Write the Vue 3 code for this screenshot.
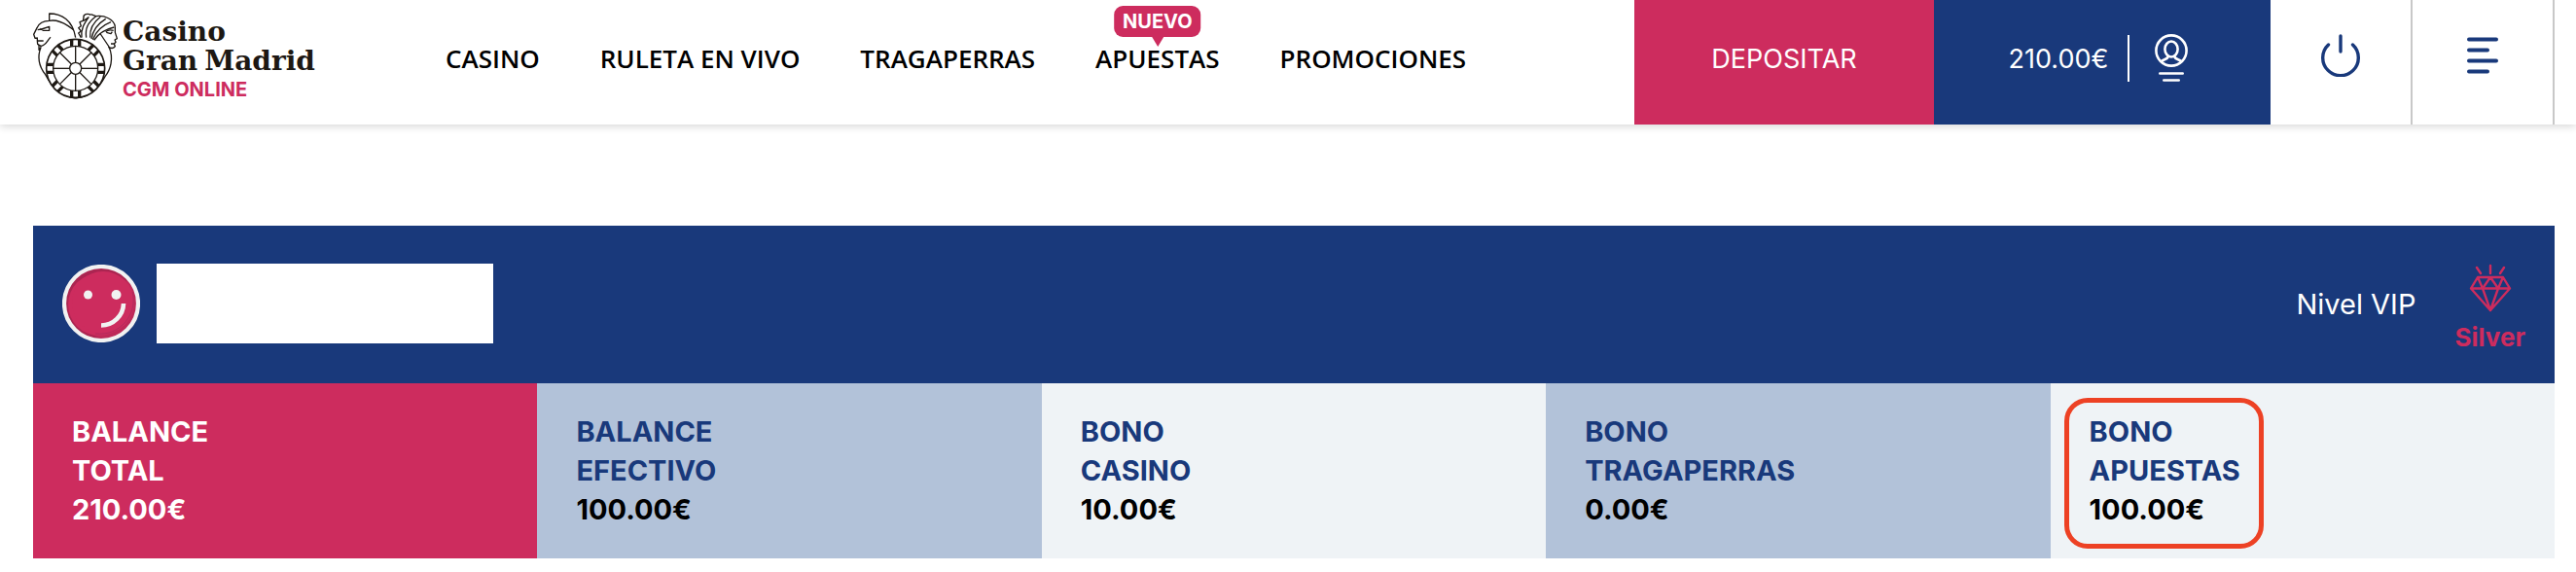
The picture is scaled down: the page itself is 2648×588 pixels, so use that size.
<script setup>
import { ref } from "vue";

const links = ref([
  { id: 1, text: "CASINO" },
  { id: 2, text: "RULETA EN VIVO" },
  { id: 3, text: "TRAGAPERRAS" },
  { id: 4, text: "APUESTAS", badge: "NUEVO" },
  { id: 5, text: "PROMOCIONES" },
]);

const balances = ref([
  { id: 1, top: "BALANCE", bottom: "TOTAL", amount: "210.00€", type: "total" },
  { id: 2, top: "BALANCE", bottom: "EFECTIVO", amount: "100.00€", type: "dark" },
  { id: 3, top: "BONO", bottom: "CASINO", amount: "10.00€", type: "light" },
  { id: 4, top: "BONO", bottom: "TRAGAPERRAS", amount: "0.00€", type: "dark" },
  {
    id: 5,
    top: "BONO",
    bottom: "APUESTAS",
    amount: "100.00€",
    type: "light",
    marked: true,
  },
]);

const spokes = [0, 45, 90, 135, 180, 225, 270, 315];
</script>

<template>
  <div class="page">
    <header class="header">
      <a href="#" class="logo">
        <svg class="logo-pic" viewBox="0 0 264 270" aria-hidden="true">
          <g
            transform="translate(-12 -18)"
            fill="none"
            stroke="#1d1813"
            stroke-width="4"
            stroke-linejoin="round"
          >
            <!-- lion -->
            <path d="M62 46V24C100 24 134 44 143 98" />
            <path d="M62 46C84 42 102 50 120 62L137 74M62 46C44 46 30 54 24 68L14 88L18 100L25 99V108H44M25 108L26 118L36 124C52 122 56 106 66 97" />
            <path d="M26 74L38 72L62 64V76H44L34 70" />
            <path d="M30 120V136L36 128C24 158 30 186 50 212C70 250 100 280 143 285" />
            <!-- woman -->
            <path d="M190 28C180 22 166 26 168 36L166 46L156 50L160 62L152 68L160 78L152 84L160 98" />
            <path d="M168 46L182 36M184 34C170 54 158 72 162 98M190 26L206 32C180 52 172 70 176 98M206 32C232 28 262 42 265 64" />
            <path d="M220 34C196 52 186 72 188 98M236 40C210 56 196 76 192 102M252 50C226 60 208 74 196 104M262 66C236 72 214 84 200 106" />
            <path d="M265 64V82L271 101L264 105L267 112L262 117L265 125C261 132 254 132 244 127M252 117H264M236 80C244 72 252 74 260 76M238 82L252 86L256 80" />
            <path d="M218 84L246 126C262 164 250 198 234 218C214 256 186 280 143 285" />
          </g>
          <circle cx="131" cy="175" r="90" fill="#fff" stroke="#1d1813" stroke-width="5" />
          <circle cx="131" cy="175" r="69" fill="none" stroke="#1d1813" stroke-width="4" />
          <g v-for="s in spokes" :key="s" :transform="`rotate(${s} 131 175)`">
            <path d="M131 157V106" stroke="#1d1813" stroke-width="4" />
            <path d="M119 86V107M143 86V107" stroke="#1d1813" stroke-width="10" />
          </g>
          <circle cx="131" cy="175" r="18" fill="#fff" stroke="#1d1813" stroke-width="4" />
        </svg>
        <span class="logo-text">
          <span class="logo-name">Casino</span>
          <span class="logo-name logo-pair"><span>Gran</span><span>Madrid</span></span>
          <span class="logo-sub">CGM ONLINE</span>
        </span>
      </a>

      <nav class="nav">
        <a v-for="link in links" :key="link.id" href="#" class="nav-link">
          {{ link.text }}
          <span v-if="link.badge" class="badge">{{ link.badge }}</span>
        </a>
      </nav>

      <div class="actions">
        <button type="button" class="deposit">DEPOSITAR</button>
        <button type="button" class="account">
          <span>210.00€</span>
          <span class="separator"></span>
          <svg class="user-icon" viewBox="0 0 34 50" aria-hidden="true">
            <g fill="none" stroke="#fff" stroke-width="2.6" stroke-linecap="round">
              <circle cx="17" cy="17" r="15.6" />
              <ellipse cx="17" cy="15.5" rx="6.6" ry="8" />
              <path d="M14 23C13 26 9 26 7 28M20 23C21 26 25 26 27 28M5.3 40.5H28.7M9.3 47.5H24.7" />
            </g>
          </svg>
        </button>
        <button type="button" class="icon-btn" aria-label="Salir">
          <svg class="power-icon" viewBox="0 0 40 44" aria-hidden="true">
            <path
              d="M20 2V18M7.5 11A18.3 18.3 0 1 0 32.5 11"
              fill="none"
              stroke="#19397b"
              stroke-width="3.4"
              stroke-linecap="round"
            />
          </svg>
        </button>
        <button type="button" class="icon-btn" aria-label="Menú">
          <svg class="menu-icon" viewBox="0 0 32 38" aria-hidden="true">
            <path
              d="M2 2.5H30M2 13.5H21M2 24.5H30M2 35.5H21"
              fill="none"
              stroke="#19397b"
              stroke-width="4"
              stroke-linecap="round"
            />
          </svg>
        </button>
      </div>
    </header>

    <main class="content">
      <section class="profile">
        <svg class="avatar" viewBox="0 0 80 80" aria-hidden="true">
          <circle cx="40" cy="40" r="38" fill="#ab2551" />
          <path d="M40 76A36 36 0 0 0 67 16L20 68Z" fill="#bd2958" />
          <circle cx="38" cy="41" r="32" fill="#cd2c5e" />
          <circle cx="42" cy="39" r="32" fill="#cd2c5e" />
          <path d="M72 28C78 50 60 74 34 71" fill="none" stroke="#a02a5a" stroke-width="0.6" />
          <circle cx="40" cy="40" r="38" fill="none" stroke="#f1f2f2" stroke-width="4.2" />
          <circle cx="26.5" cy="31" r="4.5" fill="#f1f2f2" />
          <circle cx="55.5" cy="31" r="5" fill="#f1f2f2" />
          <path d="M63 40A23 23 0 0 1 40 62.5" fill="none" stroke="#f1f2f2" stroke-width="4.6" />
        </svg>
        <div class="username"></div>
        <span class="level">Nivel VIP</span>
        <div class="vip">
          <svg class="diamond" viewBox="0 0 44 50" aria-hidden="true">
            <path
              d="M8 4L12 10M22 2V10M36 4L32 10M9 14H35L42 25.5L22 48L2 25.5ZM2 25.5H42M9 14L14 25.5L22 14L30 25.5L35 14M14 25.5L22 48L30 25.5"
              fill="none"
              stroke="#cd2c5e"
              stroke-width="2.4"
              stroke-linecap="round"
              stroke-linejoin="round"
            />
          </svg>
          <span>Silver</span>
        </div>
      </section>

      <section class="balances">
        <div v-for="item in balances" :key="item.id" class="balance" :class="item.type">
          <div>{{ item.top }}</div>
          <div>{{ item.bottom }}</div>
          <div class="amount">{{ item.amount }}</div>
          <span v-if="item.marked" class="mark"></span>
        </div>
      </section>
    </main>
  </div>
</template>

<style>
body {
  background: #fff;
}
</style>

<style scoped>
.page {
  font-family: Inter, "Liberation Sans", sans-serif;
  white-space: nowrap;
}
.header {
  display: flex;
  align-items: stretch;
  height: 128px;
  padding: 0 22px 0 34px;
  box-shadow: 0 2px 8px rgba(0, 0, 0, 0.16);
}
.logo {
  display: flex;
  align-items: flex-start;
  gap: 4px;
  width: 424px;
  padding-top: 12px;
  box-sizing: border-box;
  text-decoration: none;
}
.logo-pic {
  width: 88px;
  height: 90px;
}
.logo-text {
  display: flex;
  flex-direction: column;
  padding-top: 6px;
}
.logo-name {
  font: bold 28px/30px "DejaVu Serif", serif;
  color: #1d1813;
}
.logo-pair {
  display: flex;
  gap: 7px;
}
.logo-sub {
  font-size: 20px;
  line-height: 28px;
  font-weight: 700;
  color: #cd2c5e;
}
.nav {
  display: flex;
  align-items: center;
  gap: 62px;
  padding-bottom: 8px;
}
.nav-link {
  position: relative;
  font-family: "Open Sans", sans-serif;
  font-size: 26px;
  line-height: 36px;
  font-weight: 600;
  color: #000;
  text-decoration: none;
}
.badge {
  position: absolute;
  left: 50%;
  bottom: 40px;
  transform: translateX(-50%);
  padding: 0 9px;
  border-radius: 9px;
  background: #cd2c5e;
  font-family: Inter, sans-serif;
  font-size: 20px;
  line-height: 32px;
  font-weight: 700;
  color: #fff;
}
.badge::after {
  content: "";
  position: absolute;
  top: 100%;
  left: 50%;
  margin-left: -6px;
  border: 6px solid transparent;
  border-top: 10px solid #cd2c5e;
  border-bottom: 0;
}
.actions {
  display: flex;
  margin-left: auto;
}
.actions button {
  margin: 0;
  border: 0;
  border-radius: 0;
  padding: 0 0 8px;
  background: #fff;
  color: #fff;
  font-family: inherit;
  font-size: 27px;
  cursor: pointer;
}
.actions .deposit {
  width: 308px;
  background: #cd2c5e;
}
.actions .account {
  display: flex;
  align-items: center;
  justify-content: center;
  gap: 20px;
  width: 346px;
  padding-right: 8px;
  background: #19397b;
}
.separator {
  width: 2px;
  height: 48px;
  margin-right: 6px;
  background: #fff;
}
.user-icon {
  width: 34px;
  height: 50px;
}
.actions .icon-btn {
  width: 146px;
  border-right: 2px solid #c8c8c8;
}
.power-icon {
  width: 40px;
  height: 44px;
}
.menu-icon {
  width: 32px;
  height: 38px;
}
.content {
  padding: 104px 22px 14px 34px;
}
.profile {
  display: flex;
  align-items: center;
  padding: 39px 30px 41px;
  background: #19397b;
  color: #fff;
}
.avatar {
  width: 80px;
  height: 80px;
}
.username {
  width: 346px;
  height: 82px;
  margin-left: 17px;
  background: #fff;
}
.level {
  margin-left: auto;
  font-size: 29px;
}
.vip {
  display: flex;
  flex-direction: column;
  align-items: center;
  margin-left: 40px;
  height: 82px;
  font-size: 26px;
  line-height: 36px;
  font-weight: 700;
  color: #cd2c5e;
}
.diamond {
  width: 44px;
  height: 50px;
  margin-bottom: 8px;
  flex: none;
}
.balances {
  display: grid;
  grid-template-columns: repeat(5, 1fr);
}
.balance {
  position: relative;
  padding: 30px 40px;
  font-size: 29px;
  line-height: 40px;
  font-weight: 700;
  color: #19397b;
}
.amount {
  color: #000;
}
.total,
.total .amount {
  color: #fff;
}
.total {
  background: #cd2c5e;
}
.dark {
  background: #b2c2d9;
}
.light {
  background: #eff3f6;
}
.mark {
  position: absolute;
  left: 14px;
  top: 15px;
  width: 205px;
  height: 155px;
  box-sizing: border-box;
  border: 5px solid #ed4124;
  border-radius: 24px;
}
</style>
